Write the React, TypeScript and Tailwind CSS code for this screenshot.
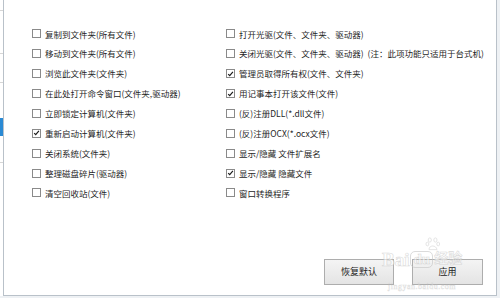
import React from 'react';

type Item = { label: string; checked?: boolean };

const leftItems: Item[] = [
  { label: '复制到文件夹(所有文件)' },
  { label: '移动到文件夹(所有文件)' },
  { label: '浏览此文件夹(文件夹)' },
  { label: '在此处打开命令窗口(文件夹,驱动器)' },
  { label: '立即锁定计算机(文件夹)' },
  { label: '重新启动计算机(文件夹)', checked: true },
  { label: '关闭系统(文件夹)' },
  { label: '整理磁盘碎片(驱动器)' },
  { label: '清空回收站(文件)' },
];

const rightItems: Item[] = [
  { label: '打开光驱(文件、文件夹、驱动器)' },
  { label: '关闭光驱(文件、文件夹、驱动器)  (注：此项功能只适用于台式机)' },
  { label: '管理员取得所有权(文件、文件夹)', checked: true },
  { label: '用记事本打开该文件(文件)', checked: true },
  { label: '(反)注册DLL(*.dll文件)' },
  { label: '(反)注册OCX(*.ocx文件)' },
  { label: '显示/隐藏 文件扩展名' },
  { label: '显示/隐藏 隐藏文件', checked: true },
  { label: '窗口转换程序' },
];

function Check({ item }: { item: Item }) {
  return (
    <div className="flex h-[19.875px] items-center gap-[4px] whitespace-pre">
      <span className="flex h-[9px] w-[9px] shrink-0 items-center justify-center border border-[#8a8a8a] bg-white">
        {item.checked && (
          <svg viewBox="0 0 9 9" className="h-[8px] w-[8px]">
            <path d="M1.5 4.6 L3.5 6.6 L7.6 1.8" fill="none" stroke="#1a1a1a" strokeWidth="1.5" />
          </svg>
        )}
      </span>
      <span>{item.label}</span>
    </div>
  );
}

export default function App() {
  return (
    <div
      className="relative flex h-[298px] w-[500px] overflow-hidden bg-[#eef1f4] text-[8.5px] text-[#262626]"
      style={{ fontFamily: '"Noto Sans CJK SC", "Noto Sans", sans-serif' }}
    >
      {/* cut-off sidebar */}
      <div className="flex h-[296px] w-[3px] shrink-0 flex-col bg-white">
        <div className="mt-[10px] h-px bg-[#d6d6d6]" />
        <div className="mt-[42px] h-px bg-[#d6d6d6]" />
        <div className="mt-[28px] h-px bg-[#d6d6d6]" />
        <div className="mt-[35px] h-[18px] bg-[#2a8ad4]" />
        <div className="mt-[26px] h-px bg-[#d6d6d6]" />
      </div>

      {/* main panel */}
      <div className="flex h-[296px] w-[494px] flex-col border-b border-l border-r border-[#b9c1c9] bg-white">
        <div className="flex pt-[24px]">
          <div className="ml-[28px] w-[194px]">
            {leftItems.map((it) => (
              <Check key={it.label} item={it} />
            ))}
          </div>
          <div>
            {rightItems.map((it) => (
              <Check key={it.label} item={it} />
            ))}
          </div>
        </div>
        <div className="mt-auto mb-[10px] flex justify-end gap-[18px] pr-[13px]">
          <button className="h-[26px] w-[70px] border border-[#adadad] bg-gradient-to-b from-[#f4f4f4] to-[#e4e4e4] text-[9px] text-[#222]">
            恢复默认
          </button>
          <button className="h-[26px] w-[71px] border border-[#adadad] bg-gradient-to-b from-[#f4f4f4] to-[#e4e4e4] text-[9px] text-[#222]">
            应用
          </button>
        </div>
      </div>

      {/* watermark */}
      <div className="pointer-events-none absolute left-[382px] top-[236px] flex flex-col items-center opacity-60">
        <svg viewBox="0 0 20 20" className="ml-[22px] h-[16px] w-[16px]">
          <g fill="none" stroke="#c9c9c9" strokeWidth="1">
            <ellipse cx="6" cy="5" rx="2" ry="2.6" />
            <ellipse cx="13" cy="5" rx="2" ry="2.6" />
            <ellipse cx="3" cy="10" rx="1.8" ry="2.3" />
            <ellipse cx="16.5" cy="10" rx="1.8" ry="2.3" />
            <path d="M5 17 C5 11 14 11 15 17 Z" />
          </g>
        </svg>
        <div
          className="-mt-[2px] flex items-center gap-[1px] text-[19px] font-bold leading-none text-white [-webkit-text-stroke:0.6px_#c4c4c4]"
          style={{ fontFamily: '"Liberation Serif", serif' }}
        >
          <span>Bai</span>
          <span className="rounded-[5px] border border-[#c4c4c4] px-[2px] text-[15px]">du</span>
          <span className="-mt-[6px] text-[14px]" style={{ fontFamily: '"Noto Sans CJK SC", sans-serif' }}>经验</span>
        </div>
        <div
          className="mt-[14px] text-[8px] leading-none tracking-[0.5px] text-white [-webkit-text-stroke:0.4px_#c8c8c8]"
          style={{ fontFamily: '"Liberation Serif", serif' }}
        >
          jingyan.baidu.com
        </div>
      </div>
    </div>
  );
}
